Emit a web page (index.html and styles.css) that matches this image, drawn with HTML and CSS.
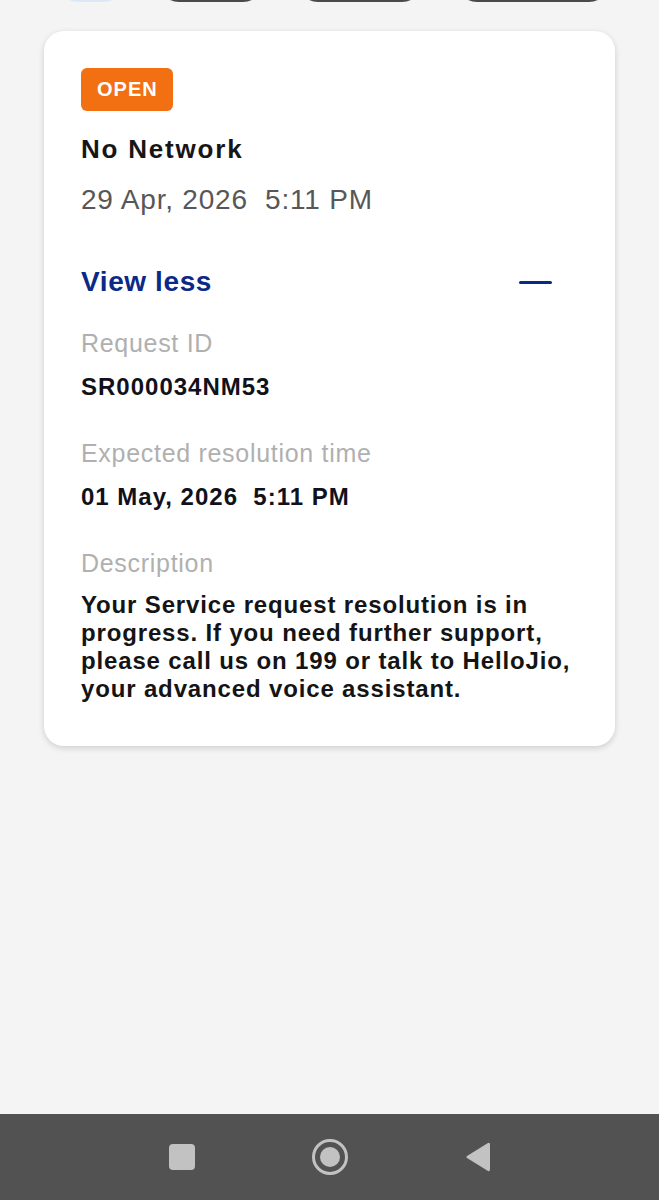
FILE: index.html
```html
<!DOCTYPE html>
<html lang="en">
<head>
  <meta charset="UTF-8">
  <meta name="viewport" content="width=device-width, initial-scale=1.0">
  <title>Service Request</title>
  <link rel="stylesheet" href="styles.css">
</head>
<body>
  <div class="screen">
    <div class="filter-row">
      <span class="chip chip-active"></span>
      <span class="chip chip-a"></span>
      <span class="chip chip-b"></span>
      <span class="chip chip-c"></span>
    </div>

    <div class="card">
      <span class="badge">OPEN</span>
      <h2 class="title">No Network</h2>
      <div class="date">29 Apr, 2026&nbsp; 5:11 PM</div>

      <div class="toggle-row">
        <span class="toggle-text">View less</span>
        <span class="minus"></span>
      </div>

      <div class="label">Request ID</div>
      <div class="value">SR000034NM53</div>

      <div class="label label-gap">Expected resolution time</div>
      <div class="value">01 May, 2026&nbsp; 5:11 PM</div>

      <div class="label label-gap">Description</div>
      <p class="desc">Your Service request resolution is in progress. If you need further support, please call us on 199 or talk to HelloJio, your advanced voice assistant.</p>
    </div>
  </div>

  <div class="nav-bar">
    <span class="nav-square"></span>
    <span class="nav-home"><span class="nav-dot"></span></span>
    <svg class="nav-back" width="26" height="32" viewBox="0 0 26 32">
      <path d="M23 2 Q25 1 25 4 L25 28 Q25 31 23 30 L2 17 Q0.5 16 2 15 Z" fill="#c2c2c2"/>
    </svg>
  </div>
</body>
</html>
```

FILE: styles.css
```css
* {
  box-sizing: border-box;
  margin: 0;
  padding: 0;
  font-family: "Liberation Sans", Arial, sans-serif;
}

body, html {
  height: 100%;
  overflow: hidden;
}

body {
  background: #f4f4f4;
  display: flex;
  flex-direction: column;
}

.screen {
  flex: 1;
}

/* chips cut off by the top edge */
.filter-row {
  display: flex;
  gap: 35px;
  padding-left: 58px;
  height: 40px;
  margin-top: -38px;
}

.chip {
  height: 40px;
  border-radius: 20px;
  border: 2px solid #4a4a4a;
  background: #f4f4f4;
}

.chip-active {
  width: 66px;
  border-color: #dde8f6;
  background: #e8f0fa;
}

.chip-a { width: 104px; }
.chip-b { width: 124px; }
.chip-c { width: 152px; }

.card {
  margin: 29px 44px 0 44px;
  padding: 37px 37px 43px 37px;
  background: white;
  border-radius: 20px;
  box-shadow: 0 2px 6px rgba(0, 0, 0, 0.16);
}

.badge {
  display: inline-block;
  height: 43px;
  line-height: 43px;
  padding: 0 15px 0 16px;
  background: #f26f12;
  color: white;
  border-radius: 6px;
  font-size: 20px;
  font-weight: bold;
  letter-spacing: 1px;
}

.title {
  margin-top: 22px;
  font-size: 26px;
  line-height: 32px;
  letter-spacing: 1.8px;
  color: #161616;
}

.date {
  margin-top: 18px;
  font-size: 28px;
  line-height: 34px;
  letter-spacing: 0.8px;
  color: #575757;
}

.toggle-row {
  display: flex;
  align-items: center;
  justify-content: space-between;
  margin-top: 48px;
}

.toggle-text {
  font-size: 28px;
  line-height: 34px;
  font-weight: bold;
  letter-spacing: 0.6px;
  color: #0b2a88;
}

.minus {
  width: 33px;
  height: 3px;
  margin-right: 26px;
  background: #0b2a88;
  border-radius: 2px;
}

.label {
  margin-top: 29px;
  font-size: 25px;
  line-height: 30px;
  letter-spacing: 0.7px;
  color: #b0b0b0;
}

.label-gap {
  margin-top: 36px;
}

.value {
  margin-top: 14px;
  font-size: 24px;
  line-height: 30px;
  font-weight: bold;
  letter-spacing: 1px;
  color: #10111c;
}

.desc {
  margin-top: 13px;
  font-size: 24px;
  line-height: 28px;
  font-weight: bold;
  letter-spacing: 0.85px;
  color: #141414;
}

.nav-bar {
  height: 86px;
  background: #525252;
  display: flex;
  align-items: center;
  justify-content: center;
}

.nav-square {
  width: 26px;
  height: 26px;
  border-radius: 4px;
  background: #c2c2c2;
}

.nav-home {
  width: 36px;
  height: 36px;
  margin: 0 117px 0 117px;
  border: 3px solid #c2c2c2;
  border-radius: 50%;
  display: flex;
  align-items: center;
  justify-content: center;
}

.nav-dot {
  width: 20px;
  height: 20px;
  border-radius: 50%;
  background: #c2c2c2;
}
```
